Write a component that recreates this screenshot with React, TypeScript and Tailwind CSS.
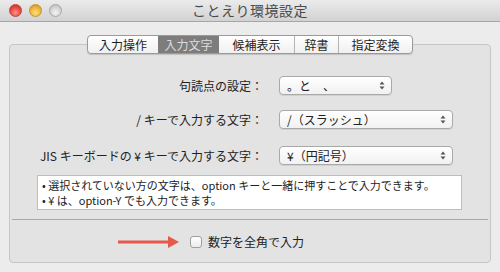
import React from "react";

const tabs = ["入力操作", "入力文字", "候補表示", "辞書", "指定変換"];
const tabWidths = ["w-[70px]", "w-[61px]", "w-[75px]", "w-[44px]", "w-[74px]"];

function Stepper() {
  return (
    <svg width="6" height="9" viewBox="0 0 6 9" className="shrink-0">
      <path d="M3 0.5 L5.5 3.5 L0.5 3.5 Z" fill="#555" />
      <path d="M3 8.5 L5.5 5.5 L0.5 5.5 Z" fill="#555" />
    </svg>
  );
}

function Popup({ value, width }: { value: string; width: string }) {
  return (
    <div
      className={`${width} h-[19px] flex items-center justify-between pl-[7px] pr-[6px] rounded-[4px] border border-[#a9a9a9] bg-gradient-to-b from-white to-[#f1f1f1] shadow-[0_1px_0_rgba(0,0,0,0.08)] text-[12px] text-[#222] leading-none`}
    >
      <span>{value}</span>
      <Stepper />
    </div>
  );
}

function Row({ label, children, mt }: { label: string; children: React.ReactNode; mt: string }) {
  return (
    <div className={`flex items-center ${mt}`}>
      <div className="w-[253px] text-right text-[12px] text-[#222] leading-none">{label}</div>
      <div className="ml-[16px]">{children}</div>
    </div>
  );
}

export default function App() {
  return (
    <div
      className="w-[500px] h-[272px] bg-[#ececec] flex flex-col overflow-hidden"
      style={{ fontFamily: '"Noto Sans CJK JP", "Noto Sans", sans-serif' }}
    >
      <div className="h-[22px] shrink-0 relative flex items-center justify-center bg-gradient-to-b from-[#ebebeb] to-[#d2d2d2] border-b border-[#a6a6a6]">
        <div className="absolute left-[9px] top-[4px] flex gap-[7px]">
          <span className="w-[13px] h-[13px] rounded-full border border-[#c2403a] bg-[radial-gradient(circle_at_50%_70%,#ff8f85,#e0443c_60%,#b5342d)]" />
          <span className="w-[13px] h-[13px] rounded-full border border-[#c9932a] bg-[radial-gradient(circle_at_50%_70%,#ffe07a,#e9b03a_60%,#c48b21)]" />
          <span className="w-[13px] h-[13px] rounded-full border border-[#a8a8a8] bg-[radial-gradient(circle_at_50%_70%,#f4f4f4,#d0d0d0_60%,#b4b4b4)]" />
        </div>
        <span className="text-[14px] text-[#4a4a4a] tracking-[0.5px]">ことえり環境設定</span>
      </div>

      <div className="flex flex-col px-[9px]">
        <div className="relative z-10 mt-[13px] self-center flex h-[19px] rounded-[4px] border border-[#9a9a9a] bg-gradient-to-b from-white to-[#f0f0f0] shadow-[0_1px_1px_rgba(0,0,0,0.15)] overflow-hidden">
          {tabs.map((t, i) => (
            <div
              key={t}
              className={`${tabWidths[i]} flex items-center justify-center text-[12px] leading-none ${
                i === 1
                  ? "bg-[#7d7d7d] text-[#dcdcdc]"
                  : "text-[#1e1e1e]"
              } ${i > 0 && i !== 1 && i !== 2 ? "border-l border-[#b4b4b4]" : ""}`}
            >
              {t}
            </div>
          ))}
        </div>

        <div className="-mt-[10px] h-[219px] rounded-[4px] border border-[#c6c6c6] bg-[#e3e3e3] flex flex-col">
          <Row label="句読点の設定：" mt="mt-[31px]">
            <Popup value="。と　、" width="w-[113px]" />
          </Row>
          <Row label="/ キーで入力する文字：" mt="mt-[15px]">
            <Popup value="/（スラッシュ）" width="w-[174px]" />
          </Row>
          <Row label="JIS キーボードの ¥ キーで入力する文字：" mt="mt-[17px]">
            <Popup value="¥（円記号）" width="w-[174px]" />
          </Row>

          <div className="ml-[27px] mt-[10px] w-[425px] h-[35px] bg-white border border-[#bdbdbd] px-[4px] pt-[2px] text-[11px] leading-[15px] text-[#222]">
            <div>• 選択されていない方の文字は、option キーと一緒に押すことで入力できます。</div>
            <div>• ¥ は、option-Y でも入力できます。</div>
          </div>

          <div className="mx-[2px] mt-[9px] border-t border-[#a9a9a9]" />

          <div className="flex items-center mt-[16px] ml-[108px]">
            <svg width="62" height="12" viewBox="0 0 62 12">
              <line x1="0" y1="6" x2="52" y2="6" stroke="#e4594a" strokeWidth="3" />
              <path d="M50 0 L61 6 L50 12 Z" fill="#e4594a" />
            </svg>
            <span className="ml-[10px] w-[12px] h-[12px] rounded-[3px] border border-[#9e9e9e] bg-gradient-to-b from-white to-[#ececec]" />
            <span className="ml-[6px] text-[12px] text-[#222] leading-none">数字を全角で入力</span>
          </div>
        </div>
      </div>
    </div>
  );
}
